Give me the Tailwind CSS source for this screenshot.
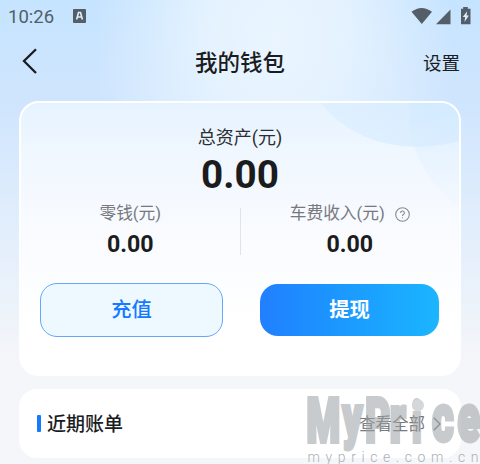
<!DOCTYPE html>
<html lang="zh-CN">
<head>
<meta charset="utf-8">
<title>我的钱包</title>
<script src="https://cdn.jsdelivr.net/npm/@tailwindcss/browser@4"></script>
</head>
<body class="w-[480px] h-[464px] overflow-hidden bg-[#f5f6f9] font-[Roboto,'Noto_Sans_CJK_SC',sans-serif] text-[#1b1c1e]">
<div class="relative flex flex-col h-[464px] overflow-hidden bg-[linear-gradient(to_bottom,#f5f6f900_100px,#f5f6f988_240px,#f5f6f9_365px),radial-gradient(ellipse_180px_240px_at_275px_40px,#eaf5ff_0%,#e4f2ff_40%,#cfe6fe00_100%),linear-gradient(to_bottom,#c5e4ff,#cfe5fe_90px,#cfe8ff)]">
  <header class="flex h-[33px] shrink-0 items-center pl-[8px] pr-[8px] text-[#535e68]">
    <span class="w-[65px] pt-[2px] text-[18.5px] leading-none">10:26</span>
    <svg class="-mt-px" width="13" height="14" viewBox="0 0 13 14"><rect width="13" height="14" rx="1" fill="#535e68"/><path d="M3.6 10.5 5.5 3.5h2l1.9 7M4.8 8h3.4" fill="none" stroke="#e0efff" stroke-width="1.6"/></svg>
    <svg class="ml-auto -mt-px" width="62" height="20" viewBox="0 0 62 20" fill="#535e68">
      <path d="M1.5 5.8Q11.5-1.8 22 5.8L11.8 18Z"/>
      <path d="M40.5 3.5V18.2H26Z"/>
      <path d="M53.2 1h4.6v1.8H60.5V18.2H51V2.8h2.2Z"/>
      <path d="M57.2 5.2 52.7 11h2.4l-.6 5 4.4-6.5h-2.3Z" fill="#dceeff"/>
    </svg>
  </header>
  <nav class="grid grid-cols-3 h-[59px] shrink-0 items-center px-[20px]">
    <svg class="-mt-[3px]" width="18" height="28" viewBox="0 0 18 28" fill="none" stroke="#1b1c1e" stroke-width="2.3"><path d="M16 2.2 4 14 16 26"/></svg>
    <h1 class="pt-[2px] text-center text-[22.5px] font-medium leading-none whitespace-nowrap">我的钱包</h1>
    <span class="pt-[4px] text-right text-[18.5px] leading-none">设置</span>
  </nav>
  <section class="relative mx-[19px] mt-[9px] flex h-[275px] shrink-0 flex-col overflow-hidden rounded-[20px] border-2 border-white bg-[linear-gradient(to_bottom,#e6f3ff,#f0f7ff_50px,#f9fbff_130px,#ffffff_220px)]">
    <svg class="absolute right-0 top-0" width="150" height="120" viewBox="0 0 150 120">
      <defs>
        <linearGradient id="a" x1="0" y1="0" x2="1" y2="0"><stop offset="0" stop-color="#d4eaff" stop-opacity=".45"/><stop offset="1" stop-color="#cce8ff" stop-opacity=".6"/></linearGradient>
        <linearGradient id="b" x1="0" y1="0" x2="0" y2="1"><stop offset="0" stop-color="#cfe8ff" stop-opacity=".5"/><stop offset="1" stop-color="#e4f2ff" stop-opacity=".2"/></linearGradient>
      </defs>
      <path d="M12 0Q45 43 110 44Q132 43 150 38V0Z" fill="url(#a)"/>
      <path d="M101 0Q95 61 150 105V0Z" fill="url(#b)"/>
    </svg>
    <div class="relative flex flex-col items-center pt-[24px]">
      <span class="text-[18px] leading-[22px] text-[#2c2e31]">总资产(元)</span>
      <strong class="mt-[6px] text-[38.7px] font-bold leading-[40px]">0.00</strong>
    </div>
    <div class="relative mt-[9px] flex h-[54px] items-start">
      <div class="flex flex-1 flex-col items-center">
        <span class="text-[16.7px] leading-[20px] text-[#77797d]">零钱(元)</span>
        <strong class="mt-[8px] text-[23.2px] font-bold leading-[24px]">0.00</strong>
      </div>
      <i class="mt-[4px] h-[47px] w-px bg-[#e0e3e8]"></i>
      <div class="flex flex-1 flex-col items-center">
        <span class="flex items-center gap-[10px] text-[16.7px] leading-[20px] text-[#77797d]">车费收入(元)
          <svg width="15" height="15" viewBox="0 0 15 15" fill="none" stroke="#898b8f" stroke-width="1.1"><circle cx="7.5" cy="7.5" r="6.8"/><path d="M5.6 6a1.9 1.9 0 1 1 2.8 1.6c-.7.4-.9.7-.9 1.5M7.5 10.2v1.1"/></svg>
        </span>
        <strong class="mt-[8px] text-[23.2px] font-bold leading-[24px]">0.00</strong>
      </div>
    </div>
    <div class="relative mt-[25px] flex items-center justify-between pl-[19px] pr-[20px]">
      <button class="h-[54px] w-[183px] rounded-[17px] border border-[#63a7fb] bg-[#eef8ff] text-[20.3px] font-medium leading-none text-[#147aff]">充值</button>
      <button class="h-[52px] w-[179px] rounded-[18px] bg-linear-to-r from-[#217fff] to-[#1cb5ff] text-[20.3px] font-bold leading-none text-white">提现</button>
    </div>
  </section>
  <section class="mx-[19px] mt-[13px] flex h-[69px] shrink-0 items-center rounded-[18px] bg-white pl-[18px] pr-[20px]">
    <i class="mr-[6px] h-[17px] w-[4px] rounded-[1px] bg-[#147aff]"></i>
    <h2 class="pt-px text-[19px] font-medium leading-none">近期账单</h2>
    <span class="ml-auto pt-[3px] text-[16.5px] leading-none text-[#77797c]">查看全部</span>
    <svg class="ml-[8px]" width="8" height="14" viewBox="0 0 8 14" fill="none" stroke="#77797c" stroke-width="1.3"><path d="M.8.8 7 7 .8 13.2"/></svg>
  </section>
  <svg class="absolute bottom-0 right-0 font-[Roboto,sans-serif]" width="180" height="74" viewBox="300 390 180 74">
    <g opacity=".55" fill="#9ca1a5" stroke="#9ca1a5" stroke-width="4" font-weight="900">
      <text transform="translate(306.4 442) scale(.62 1)" font-size="62">M</text>
      <text transform="translate(342.6 436.5) scale(.65 1)" font-size="59">y</text>
      <text transform="translate(365.2 442) scale(.62 1)" font-size="62">P</text>
      <text transform="translate(389.8 442) scale(.64 1)" font-size="66.5">r</text>
      <text transform="translate(411.9 442) scale(.62 1)" font-size="56">i</text>
      <text transform="translate(432 441) scale(.63 1)" font-size="66.5">c</text>
      <text transform="translate(457.4 441) scale(.62 1)" font-size="66.5">e</text>
    </g>
    <circle cx="418" cy="405.2" r="6" fill="#d5d8db"/>
    <text x="307.5" y="461.5" font-size="14" font-weight="300" textLength="171" fill="#abb0b5">myprice.com.cn</text>
  </svg>
</div>
</body>
</html>
